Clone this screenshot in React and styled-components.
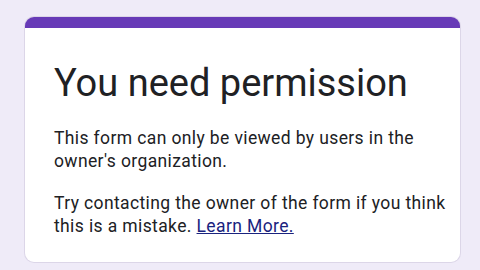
import React from 'react'
import styled, { createGlobalStyle } from 'styled-components'

const GlobalStyle = createGlobalStyle`
  html, body {
    margin: 0;
    padding: 0;
    background: #efebf8;
    font-family: Roboto, "Liberation Sans", sans-serif;
  }
`

const Page = styled.div`
  width: 480px;
  height: 270px;
  padding: 17px 20px 0 25px;
  box-sizing: border-box;
  overflow: hidden;
`

const Card = styled.main`
  background: #fff;
  border-top: 11px solid #673ab7;
  border-radius: 9px;
  height: 245px;
  box-sizing: border-box;
  padding: 31px 14px 0 29px;
  box-shadow: 0 0 0 1px #dcd6e8;
`

const Title = styled.h1`
  margin: 0 0 20px;
  font-size: 38px;
  font-weight: 400;
  line-height: 48px;
  color: #202124;
`

const Text = styled.p`
  margin: 0 0 20px;
  font-size: 17.5px;
  line-height: 22.5px;
  letter-spacing: 0.38px;
  color: #202124;
`

const LearnLink = styled.a`
  color: #1a237e;
  text-decoration: underline;
`

const App = () => (
  <>
    <GlobalStyle />
    <Page>
      <Card>
        <Title>You need permission</Title>
        <Text>
          This form can only be viewed by users in the owner's organization.
        </Text>
        <Text>
          Try contacting the owner of the form if you think this is a mistake.{' '}
          <LearnLink href='#'>Learn More.</LearnLink>
        </Text>
      </Card>
    </Page>
  </>
)

export default App
